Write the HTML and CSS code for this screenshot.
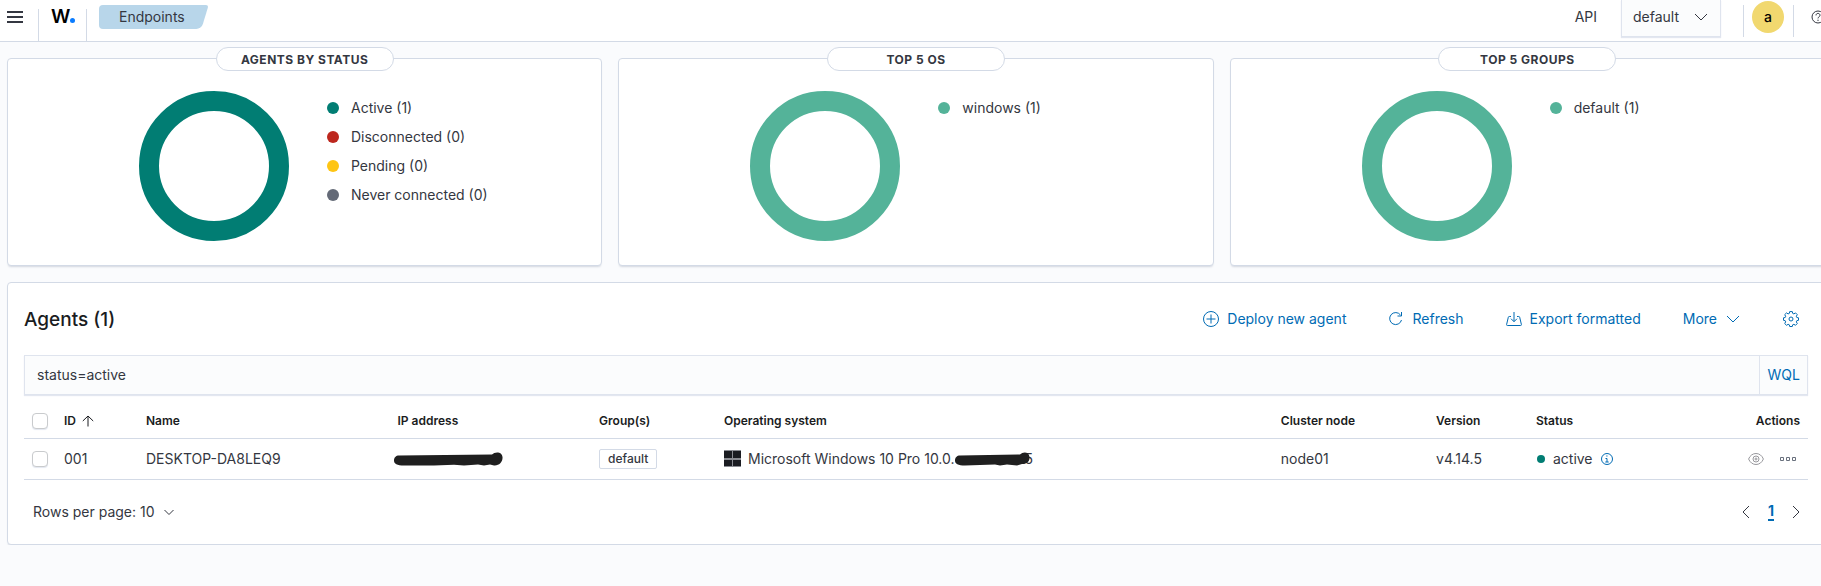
FILE: index.html
```html
<!DOCTYPE html>
<html lang="en">
<head>
<meta charset="utf-8">
<title>Endpoints</title>
<link rel="stylesheet" href="styles.css">
</head>
<body>
<header class="topbar">
  <button class="icon-button menu-button" type="button" aria-label="Menu">
    <svg class="icon" viewBox="0 0 16 16" fill="currentColor"><path d="M0 2h16v2H0zM0 7h16v2H0zM0 12h16v2H0z"/></svg>
  </button>
  <span class="divider"></span>
  <a class="logo" href="#">W<span class="logo-dot"></span></a>
  <span class="divider"></span>
  <nav class="breadcrumbs"><span class="breadcrumb">Endpoints</span></nav>
  <div class="topbar-right">
    <label class="api-label" for="api">API</label>
    <span class="api-select">
      <select id="api"><option>default</option></select>
      <svg class="icon select-arrow" viewBox="0 0 16 16" fill="none" stroke="currentColor"><path d="M2 5l6 6 6-6"/></svg>
    </span>
    <span class="divider"></span>
    <button class="avatar" type="button">a</button>
    <span class="divider"></span>
    <button class="icon-button help-button" type="button" aria-label="Help">
      <svg class="icon" viewBox="0 0 16 16" fill="none" stroke="currentColor"><circle cx="7" cy="8" r="6"/><path d="M5 6.400c0-1.200.8-2 2-2s2 .8 2 1.900c0 1.500-2 1.500-2 3.100M7 10.700v1.300"/></svg>
    </button>
  </div>
</header>

<main class="page">
  <div class="cards">
    <section class="panel card">
      <h2 class="card-title">Agents by status</h2>
      <svg class="donut donut-active" viewBox="0 0 150 150"><circle cx="75" cy="75" r="65"/></svg>
      <ul class="legend">
        <li class="legend-item"><span class="dot dot-active"></span>Active (1)</li>
        <li class="legend-item"><span class="dot dot-disconnected"></span>Disconnected (0)</li>
        <li class="legend-item"><span class="dot dot-pending"></span>Pending (0)</li>
        <li class="legend-item"><span class="dot dot-never"></span>Never connected (0)</li>
      </ul>
    </section>
    <section class="panel card">
      <h2 class="card-title">Top 5 OS</h2>
      <svg class="donut donut-top" viewBox="0 0 150 150"><circle cx="75" cy="75" r="65"/></svg>
      <ul class="legend">
        <li class="legend-item"><span class="dot dot-top"></span>windows (1)</li>
      </ul>
    </section>
    <section class="panel card">
      <h2 class="card-title">Top 5 groups</h2>
      <svg class="donut donut-top" viewBox="0 0 150 150"><circle cx="75" cy="75" r="65"/></svg>
      <ul class="legend">
        <li class="legend-item"><span class="dot dot-top"></span>default (1)</li>
      </ul>
    </section>
  </div>

  <section class="panel agents">
    <div class="agents-head">
      <h1 class="agents-title">Agents (1)</h1>
      <div class="actions">
        <button class="link-button" type="button">
          <svg class="icon" viewBox="0 0 16 16" fill="none" stroke="currentColor"><circle cx="8" cy="8" r="7.500"/><path d="M8 3.500v9M3.500 8h9"/></svg>
          Deploy new agent
        </button>
        <button class="link-button" type="button">
          <svg class="icon" viewBox="0 0 16 16" fill="none" stroke="currentColor"><path d="M12.500 4A6 6 0 1 0 13.500 9M13.500 1v4h-4"/></svg>
          Refresh
        </button>
        <button class="link-button" type="button">
          <svg class="icon" viewBox="0 0 16 16" fill="none" stroke="currentColor"><path d="M8 1v9.500M5 7.700l3 3 3-3M5 5.500H3.300c-.6 0-.9.3-1 .8L.6 13.500c-.1.700.2 1 .8 1h13.200c.6 0 .9-.3.800-1l-1.700-7.200c-.1-.5-.4-.8-1-.8H11"/></svg>
          Export formatted
        </button>
        <button class="link-button" type="button">
          More
          <svg class="icon" viewBox="0 0 16 16" fill="none" stroke="currentColor"><path d="M2 5l6 6 6-6"/></svg>
        </button>
        <button class="link-button" type="button" aria-label="Settings">
          <svg class="icon" viewBox="0 0 16 16" fill="none" stroke="currentColor"><path d="M6.700.6h2.600l.4 1.800 1.200.5 1.600-1 1.800 1.800-1 1.500.5 1.300 1.700.3v2.500l-1.700.4-.5 1.200 1 1.600-1.800 1.800-1.600-1-1.200.5-.4 1.700H6.700l-.4-1.700-1.200-.5-1.600 1-1.800-1.800 1-1.600-.5-1.200-1.700-.4V6.800l1.700-.3.500-1.300-1-1.500 1.800-1.800 1.600 1 1.200-.5z"/><circle cx="8" cy="8" r="2"/></svg>
        </button>
      </div>
    </div>

    <div class="search">
      <input class="search-input" type="text" value="status=active" aria-label="Search">
      <button class="search-mode" type="button">WQL</button>
    </div>

    <table class="table">
      <colgroup>
        <col class="col-check"><col class="col-id"><col class="col-name"><col class="col-ip"><col class="col-group"><col><col class="col-node"><col class="col-version"><col class="col-status"><col class="col-actions">
      </colgroup>
      <thead>
        <tr>
          <th><input class="checkbox" type="checkbox" aria-label="Select all rows"></th>
          <th><span class="cell-line sort">ID <svg class="sort-icon" viewBox="0 0 12 12" fill="none" stroke="currentColor"><path d="M6 11.500V1.500M.8 6L6 1l5.200 5"/></svg></span></th>
          <th>Name</th>
          <th>IP address</th>
          <th>Group(s)</th>
          <th>Operating system</th>
          <th>Cluster node</th>
          <th>Version</th>
          <th>Status</th>
          <th class="align-right">Actions</th>
        </tr>
      </thead>
      <tbody>
        <tr>
          <td><input class="checkbox" type="checkbox" aria-label="Select row 001"></td>
          <td>001</td>
          <td>DESKTOP-DA8LEQ9</td>
          <td><svg class="mask mask-ip" viewBox="0 0 109 14"><path d="M5 3.500L98 2.500C101-.5 108-.5 108.500 5 109 10 105 14 100 13.500L96 12.500 90 13.500 84 12.500 70 13.500 60 12.700 40 13.500 10 13.500C3 13.500 0 12 0 8.500 0 5.500 2 3.500 5 3.500z"/></svg></td>
          <td><span class="badge">default</span></td>
          <td>
            <span class="cell-line os">
              <svg class="os-icon" viewBox="0 0 17 17"><path class="os-gap" d="M0 0h17v17H0z"/><path d="M0 1h8v7H0zM9 1h8v7H9zM0 10h8v6H0zM9 10h8v6H9z"/></svg>
              <span>Microsoft Windows 10 Pro 10.0.</span>
              <svg class="mask mask-os" viewBox="0 0 75 14"><path d="M5 3.500L65 2.500C68-.5 74-.5 74.500 5 75 10 71 12.500 67 12L62 13.500 52 12.500 45 13.500 40 12.500 10 13.500C3 13.500 0 12 0 8.500 0 5.500 2 3.500 5 3.500z"/></svg>
              <span>5</span>
            </span>
          </td>
          <td>node01</td>
          <td>v4.14.5</td>
          <td>
            <span class="cell-line status">
              <span class="status-dot"></span>active
              <svg class="info-icon" viewBox="0 0 12 12" fill="none" stroke="currentColor"><circle cx="6" cy="6" r="5.500"/><path d="M4.500 5.500H6V9M4.300 9h3.400M5.300 3h1.200"/></svg>
            </span>
          </td>
          <td>
            <span class="cell-line row-actions">
              <button class="icon-button" type="button" aria-label="View"><svg class="icon" viewBox="0 0 16 16" fill="none" stroke="currentColor"><path d="M.6 8C2 4.500 4.800 2.500 8 2.500s6 2 7.400 5.500C14 11.500 11.200 13.500 8 13.500S2 11.500.6 8z"/><circle cx="8" cy="8" r="3"/><circle cx="8" cy="8" r="1"/></svg></button>
              <button class="icon-button more-button" type="button" aria-label="More actions"><svg class="icon" viewBox="0 0 16 16" fill="none" stroke="currentColor"><path d="M.5 6.500h3v3h-3zM6.500 6.500h3v3h-3zM12.500 6.500h3v3h-3z"/></svg></button>
            </span>
          </td>
        </tr>
      </tbody>
    </table>

    <div class="table-footer">
      <button class="rows-button" type="button">Rows per page: 10
        <svg class="sort-icon" viewBox="0 0 12 12" fill="none" stroke="currentColor"><path d="M1.500 4L6 8.500 10.500 4"/></svg>
      </button>
      <nav class="pagination">
        <button class="icon-button" type="button" aria-label="Previous page"><svg class="icon" viewBox="0 0 16 16" fill="none" stroke="currentColor"><path d="M11 2L5 8l6 6"/></svg></button>
        <a class="page-number" href="#">1</a>
        <button class="icon-button" type="button" aria-label="Next page"><svg class="icon" viewBox="0 0 16 16" fill="none" stroke="currentColor"><path d="M5 2l6 6-6 6"/></svg></button>
      </nav>
    </div>
  </section>
</main>
</body>
</html>
```
FILE: styles.css
```css
* { box-sizing: border-box; }

body {
  margin: 0;
  overflow-x: hidden;
  background: #fafbfd;
  color: #343741;
  font: 14px/20px Inter, "Liberation Sans", sans-serif;
}

button, input, select {
  margin: 0;
  padding: 0;
  border: 0;
  background: none;
  color: inherit;
  font: inherit;
}

a { color: inherit; text-decoration: none; }
h1, h2, ul { margin: 0; padding: 0; }
svg { display: block; flex: none; }

.icon { width: 16px; height: 16px; }
.icon-button { display: flex; align-items: center; }

/* Top bar */
.topbar {
  display: flex;
  align-items: flex-start;
  height: 42px;
  margin-right: -6px;
  border-bottom: 1px solid #d3dae6;
  background: #fff;
}

.divider {
  align-self: flex-end;
  width: 1px;
  height: 32px;
  background: #d3dae6;
}

.menu-button { height: 34px; padding: 0 15px 0 7px; }

.logo {
  display: flex;
  align-items: baseline;
  width: 47px;
  padding-left: 12px;
  color: #000;
  font-size: 19px;
  font-weight: 600;
  line-height: 34px;
}

.logo-dot {
  width: 5px;
  height: 5px;
  border-radius: 50%;
  background: #0a7cff;
}

.breadcrumbs { padding: 5px 12px; }

.breadcrumb {
  position: relative;
  z-index: 0;
  display: block;
  padding: 0 24px 0 20px;
  line-height: 24px;
}

.breadcrumb::before, .breadcrumb::after {
  content: "";
  position: absolute;
  z-index: -1;
  top: 0;
  bottom: 0;
  background: #b8d6ea;
}

.breadcrumb::before { left: 0; right: 16px; border-radius: 4px 0 0 4px; }
.breadcrumb::after { left: 50%; right: 4px; border-radius: 0 3px 5px 0; transform: skewX(-17deg); }

.topbar-right { display: flex; align-items: flex-start; margin-left: auto; }
.api-label { padding-right: 24px; line-height: 34px; }

.api-select { position: relative; margin-right: 22px; }

.api-select select {
  width: 100px;
  height: 37px;
  padding: 0 0 3px 11px;
  border: 1px solid #dfe4ee;
  border-top: 0;
  background: #fbfcfd;
  box-shadow: 0 1px 1px #e3e7f0;
  appearance: none;
}

.select-arrow { position: absolute; top: 9px; right: 12px; pointer-events: none; }

.avatar {
  width: 32px;
  height: 32px;
  margin: 1px 9px 0 8px;
  border-radius: 50%;
  background: #f1d86f;
  color: #000;
  font-weight: 500;
}

.help-button { height: 34px; padding-left: 17px; }

/* Panels */
.page { margin: 16px -4px 0 7px; }

.panel {
  border: 1px solid #d3dae6;
  border-radius: 4px;
  background: #fff;
  box-shadow: 0 2px 2px -1px rgba(152, 162, 179, 0.4);
}

.cards {
  display: grid;
  grid-template-columns: repeat(3, 1fr);
  gap: 16px;
  margin-bottom: 16px;
}

.card {
  position: relative;
  display: flex;
  gap: 38px;
  padding: 32px 16px 24px 22%;
}

.card-title {
  position: absolute;
  top: -12px;
  left: 50%;
  width: 30%;
  padding-top: 1px;
  border: 1px solid #d3dae6;
  border-radius: 12px;
  background: #fff;
  font-size: 12px;
  font-weight: 700;
  letter-spacing: 0.5px;
  line-height: 21px;
  text-align: center;
  text-transform: uppercase;
  transform: translateX(-50%);
}

.donut { width: 150px; height: 150px; fill: none; stroke-width: 20; }
.donut-active { stroke: #017d73; }
.donut-top { stroke: #54b399; }

.legend { padding-top: 2px; list-style: none; }
.legend-item { display: flex; align-items: center; gap: 12px; line-height: 29px; }

.dot { width: 12px; height: 12px; border-radius: 50%; }
.dot-active { background: #017d73; }
.dot-disconnected { background: #bd271e; }
.dot-pending { background: #fec514; }
.dot-never { background: #646a77; }
.dot-top { background: #54b399; }

/* Agents */
.agents { padding: 16px; }
.agents-head { display: flex; align-items: center; justify-content: space-between; height: 40px; margin-bottom: 16px; }
.agents-title { padding-top: 2px; color: #1a1c21; font-size: 19px; font-weight: 500; line-height: 24px; }

.actions { display: flex; gap: 26px; padding-right: 1px; }
.link-button { display: flex; align-items: center; gap: 8px; height: 40px; padding: 0 8px; color: #006bb4; }

.search {
  display: flex;
  border: 1px solid #dfe4ee;
  background: #fbfcfd;
  box-shadow: 0 1px 1px #e3e7f0;
}

.search-input { flex: 1; height: 38px; padding: 0 12px 1px; }
.search-mode { padding: 0 7px 0 8px; border-left: 1px solid #dfe4ee; color: #006bb4; }

.table { width: 100%; border-collapse: collapse; table-layout: fixed; }
.table th, .table td { padding: 0 8px; border-bottom: 1px solid #d3dae6; text-align: left; }
.table th { height: 43px; padding-top: 10px; color: #1a1c21; font-size: 12px; font-weight: 600; }
.table td { height: 41px; }
.table .align-right { text-align: right; }

.col-check { width: 32px; }
.col-id { width: 82px; }
.col-name { width: 14.1%; }
.col-ip { width: 11.3%; }
.col-group { width: 7%; }
.col-node { width: 8.7%; }
.col-version { width: 5.6%; }
.col-status { width: 9.6%; }
.col-actions { width: 6.1%; }

.cell-line { display: flex; align-items: center; }
.sort { gap: 6px; }
.sort-icon { width: 12px; height: 12px; }

.checkbox {
  display: block;
  width: 16px;
  height: 16px;
  border: 1px solid #c9cbcd;
  border-radius: 4px;
  background: #fff;
  box-shadow: 0 1px 1px #e3e7f0;
  appearance: none;
}

.mask { fill: #1f1f1f; }
.mask-ip { width: 109px; height: 14px; margin-left: -4px; }
.mask-os { z-index: 1; width: 75px; height: 14px; margin-right: -5px; }

.badge {
  display: inline-block;
  padding: 0 8px;
  border: 1px solid #d3dae6;
  border-radius: 2px;
  font-size: 12px;
  font-weight: 500;
  line-height: 18px;
  vertical-align: middle;
}

.os-icon { width: 17px; height: 17px; margin-right: 7px; fill: #1a1c21; }
.os-icon .os-gap { fill: #8a8c92; }

.status-dot { width: 8px; height: 8px; margin: 0 8px 0 1px; border-radius: 50%; background: #017d73; }
.info-icon { width: 12px; height: 12px; margin-left: 8px; color: #006bb4; }

.row-actions { justify-content: flex-end; gap: 16px; padding-right: 4px; color: #98989d; }
.more-button { color: #69707d; }

.table-footer { display: flex; align-items: center; justify-content: space-between; padding: 20px 4px 4px 9px; }
.rows-button { display: flex; align-items: center; gap: 8px; height: 24px; }
.pagination { display: flex; align-items: center; gap: 14px; }
.page-number { border-bottom: 2px solid #006bb4; color: #006bb4; font-weight: 700; line-height: 17px; }
```
